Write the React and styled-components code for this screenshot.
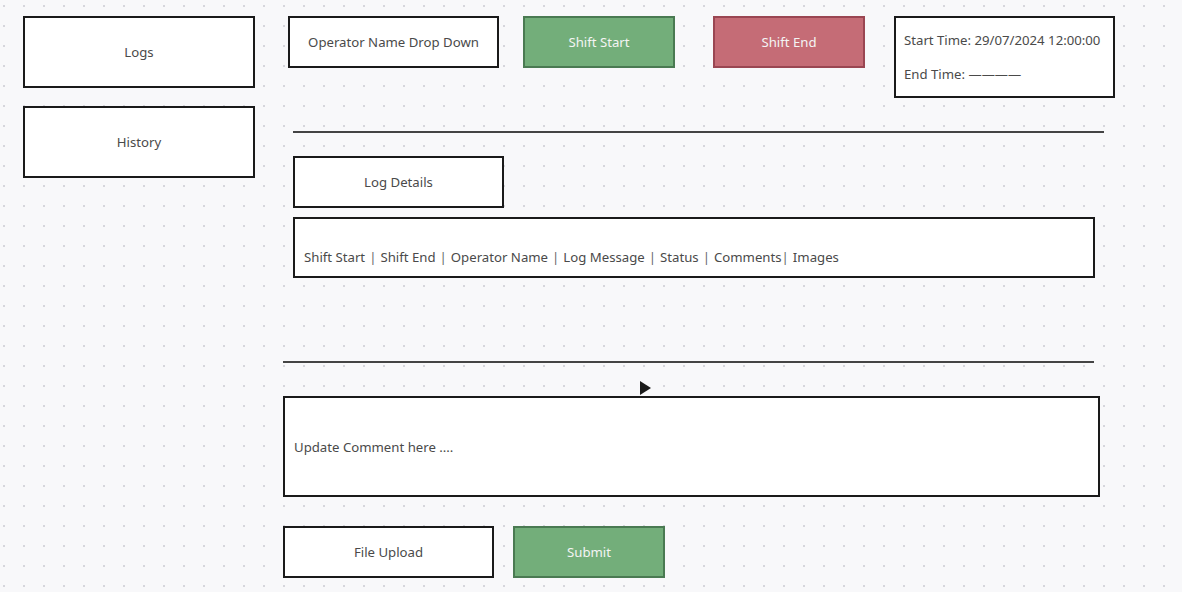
import React from 'react';
import styled, { createGlobalStyle } from 'styled-components';

const GlobalStyle = createGlobalStyle`
  html, body {
    margin: 0;
    padding: 0;
  }
  body {
    width: 1182px;
    height: 592px;
    overflow: hidden;
    background-color: #f8f8fa;
    background-image: radial-gradient(circle, #d6d6dc 1px, transparent 1.3px);
    background-size: 20px 20px;
    background-position: -6px -4px;
    font-family: 'Noto Sans', 'Open Sans', sans-serif;
    color: #4a4a4a;
  }
`;

const columns = ['Shift Start', 'Shift End', 'Operator Name', 'Log Message', 'Status', 'Comments', 'Images'];

export default function App() {
  return (
    <>
      <GlobalStyle />
      <Page>
        <Sidebar>
          <Box $w={232} $h={72}>Logs</Box>
          <Box $w={232} $h={72}>History</Box>
        </Sidebar>
        <Main>
          <TopRow>
            <Box $w={211} $h={52} $ml={5}>Operator Name Drop Down</Box>
            <Button $w={152} $ml={24} $tone="green">Shift Start</Button>
            <Button $w={152} $ml={38} $tone="red">Shift End</Button>
            <TimeBox>
              <span>Start Time: 29/07/2024 12:00:00</span>
              <span>End Time: ————</span>
            </TimeBox>
          </TopRow>
          <Rule $w={811} $ml={10} $mt={33} />
          <Box $w={211} $h={52} $ml={10} $mt={23}>Log Details</Box>
          <ColumnsBox>
            {columns.map((c, i) => (
              <React.Fragment key={c}>
                {i > 0 && <Sep $tight={c === 'Images'}>|</Sep>}
                {c}
              </React.Fragment>
            ))}
          </ColumnsBox>
          <Rule $w={811} $mt={83} />
          <Pointer>
            <svg width="11" height="14" viewBox="0 0 11 14">
              <path d="M0 0 L11 7 L0 14 Z" fill="#1a1a1a" />
            </svg>
          </Pointer>
          <CommentBox>Update Comment here ....</CommentBox>
          <BottomRow>
            <Box $w={211} $h={52}>File Upload</Box>
            <Button $w={152} $ml={19} $tone="green">Submit</Button>
          </BottomRow>
        </Main>
      </Page>
    </>
  );
}

const Page = styled.div`
  display: flex;
  align-items: flex-start;
`;

const Sidebar = styled.div`
  display: flex;
  flex-direction: column;
  gap: 18px;
  padding: 16px 0 0 23px;
  width: 260px;
`;

const Main = styled.div`
  display: flex;
  flex-direction: column;
  align-items: flex-start;
  padding-top: 16px;
`;

const Box = styled.div`
  box-sizing: border-box;
  width: ${(p) => p.$w}px;
  height: ${(p) => p.$h}px;
  margin-left: ${(p) => p.$ml || 0}px;
  margin-top: ${(p) => p.$mt || 0}px;
  display: flex;
  align-items: center;
  justify-content: center;
  background: #fff;
  border: 2px solid #1a1a1a;
  font-size: 13.2px;
  color: #4a4a4a;
`;

const tones = {
  green: { bg: '#73ae7a', border: '#4a7a52' },
  red: { bg: '#c56c76', border: '#9a4652' },
};

const Button = styled.div`
  box-sizing: border-box;
  width: ${(p) => p.$w}px;
  height: 52px;
  margin-left: ${(p) => p.$ml || 0}px;
  display: flex;
  align-items: center;
  justify-content: center;
  background: ${(p) => tones[p.$tone].bg};
  border: 2px solid ${(p) => tones[p.$tone].border};
  color: #f4f4f4;
  font-size: 13.2px;
`;

const TopRow = styled.div`
  display: flex;
  align-items: flex-start;
`;

const TimeBox = styled.div`
  box-sizing: border-box;
  width: 221px;
  height: 82px;
  margin-left: 29px;
  padding: 13px 0 0 8px;
  display: flex;
  flex-direction: column;
  gap: 16px;
  background: #fff;
  border: 2px solid #1a1a1a;
  font-size: 13.2px;
  color: #4a4a4a;
`;

const Rule = styled.div`
  width: ${(p) => p.$w}px;
  height: 2px;
  margin-left: ${(p) => p.$ml || 0}px;
  margin-top: ${(p) => p.$mt || 0}px;
  background: #444;
`;

const ColumnsBox = styled.div`
  box-sizing: border-box;
  width: 802px;
  height: 61px;
  margin: 9px 0 0 10px;
  padding: 29px 0 0 9px;
  background: #fff;
  border: 2px solid #1a1a1a;
  font-size: 13.2px;
  color: #4a4a4a;
  white-space: pre;
`;

const Sep = styled.span`
  margin: ${(p) => (p.$tight ? '0 4px 0 0' : '0 4px')};
  color: #666;
`;

const Pointer = styled.div`
  display: flex;
  margin: 18px 0 0 357px;
  height: 15px;
`;

const CommentBox = styled.div`
  box-sizing: border-box;
  width: 817px;
  height: 101px;
  display: flex;
  align-items: center;
  padding-left: 9px;
  background: #fff;
  border: 2px solid #1a1a1a;
  font-size: 13.2px;
  color: #4a4a4a;
`;

const BottomRow = styled.div`
  display: flex;
  margin-top: 29px;
`;
